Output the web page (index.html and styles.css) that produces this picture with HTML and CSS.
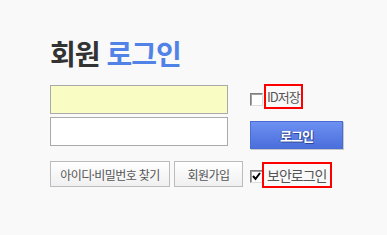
FILE: index.html
```html
<!DOCTYPE html>
<html lang="ko">
<head>
    <meta charset="UTF-8">
    <meta name="viewport" content="width=device-width, initial-scale=1.0">
    <title>회원 로그인</title>
    <link rel="stylesheet" href="styles.css">
</head>
<body>
    <div class="login">
        <h1>회원 <span class="point">로그인</span></h1>

        <form class="login-form" onsubmit="return false">
            <input type="text" class="field field-id" aria-label="아이디">
            <label class="check-label save-id">
                <span class="check"></span>
                <span class="mark">ID저장</span>
            </label>

            <input type="password" class="field field-pw" aria-label="비밀번호">
            <button type="submit" class="btn-login">로그인</button>

            <div class="links">
                <button type="button" class="btn-gray btn-find">아이디·비밀번호 찾기</button>
                <button type="button" class="btn-gray btn-join">회원가입</button>
            </div>
            <label class="check-label secure">
                <span class="check checked">
                    <svg width="11" height="11" viewBox="0 0 11 11"><path d="M2 5 L4.5 8 L9 2" fill="none" stroke="#000" stroke-width="2"/></svg>
                </span>
                <span class="mark">보안로그인</span>
            </label>
        </form>
    </div>
</body>
</html>
```

FILE: styles.css
```css
body {
    margin: 0;
    background: #f9f9f9;
    font-family: "Noto Sans CJK KR", "Noto Sans", sans-serif;
}
.login {
    padding: 37px 0 0 50px;
}
h1 {
    margin: 0 0 15px;
    font-size: 28px;
    line-height: 33px;
    letter-spacing: -1px;
    font-weight: bold;
    color: #333;
}
h1 .point {
    color: #5182e8;
}
.login-form {
    display: grid;
    grid-template-columns: 200px auto;
    align-items: start;
}
.field {
    width: 178px;
    height: 29px;
    box-sizing: border-box;
    margin: 0;
    border: 1px solid #aaa;
    background: #fff;
    outline: none;
}
.field-id {
    background: #fafdc3;
}
.field-pw {
    margin-top: 3px;
}
.check-label {
    display: flex;
    align-items: flex-start;
    font-size: 13px;
    color: #555;
}
.check {
    width: 13px;
    height: 13px;
    box-sizing: border-box;
    border: 1px solid #ddd;
    border-top-color: #808080;
    border-left-color: #808080;
    box-shadow: inset 1px 1px 0 #a0a0a0;
    background: #fff;
    display: flex;
    align-items: center;
    justify-content: center;
}
.mark {
    display: flex;
    align-items: center;
    box-sizing: border-box;
    border: 2px solid #f00;
    letter-spacing: -1px;
}
.save-id {
    margin-top: -1px;
}
.save-id .check {
    margin-top: 9px;
}
.save-id .mark {
    height: 25px;
    width: 39px;
    margin-left: 1px;
    padding-left: 1px;
}
.btn-login {
    margin-top: 7px;
    width: 93px;
    height: 28px;
    border: 1px solid #4a6bd2;
    background: linear-gradient(#6d90f2, #4b6fdc);
    box-shadow: 1px 1px 0 #c9c9c9;
    color: #fff;
    font-family: inherit;
    font-size: 13px;
    font-weight: bold;
    letter-spacing: -1px;
    text-shadow: 1px 1px 0 #2d4597, -1px 0 0 #3a56b0;
}
.links {
    display: flex;
    gap: 4px;
    margin-top: 12px;
}
.btn-gray {
    height: 26px;
    border: 1px solid #bcbcbc;
    background: linear-gradient(#fff, #f0f0f0);
    color: #555;
    font-family: inherit;
    font-size: 12px;
    letter-spacing: -0.6px;
    padding: 0;
}
.btn-find {
    width: 120px;
}
.btn-join {
    width: 69px;
}
.secure {
    margin-top: 13px;
}
.secure .check {
    margin-top: 8px;
}
.secure .mark {
    height: 26px;
    width: 70px;
    margin-left: -1px;
    padding-left: 3px;
    font-size: 14px;
}
```
